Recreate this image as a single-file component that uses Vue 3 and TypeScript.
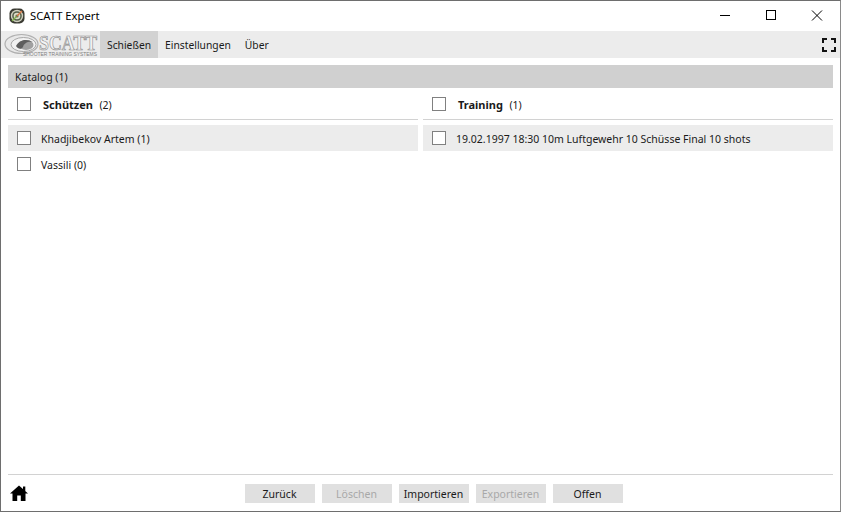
<script setup lang="ts">
const rowsLeft = [
  { label: 'Khadjibekov Artem (1)', shaded: true },
  { label: 'Vassili (0)', shaded: false },
]
const rowsRight = [
  { label: '19.02.1997 18:30 10m Luftgewehr 10 Schüsse Final 10 shots', shaded: true },
]
const menu = [
  { label: 'Schießen', active: true },
  { label: 'Einstellungen', active: false },
  { label: 'Über', active: false },
]
const buttons = [
  { label: 'Zurück', disabled: false },
  { label: 'Löschen', disabled: true },
  { label: 'Importieren', disabled: false },
  { label: 'Exportieren', disabled: true },
  { label: 'Offen', disabled: false },
]
</script>

<template>
  <div class="window">
    <header class="titlebar">
      <svg class="appicon" width="16" height="16" viewBox="0 0 16 16">
        <rect x="0.5" y="0.5" width="15" height="15" rx="5" fill="#3a3a32" />
        <circle cx="8" cy="8" r="6.2" fill="#cfcfbe" />
        <circle cx="8" cy="8" r="4.8" fill="#55604a" />
        <circle cx="8" cy="8" r="3.3" fill="#dcdcc8" />
        <circle cx="8" cy="8" r="1.6" fill="#6a7458" />
        <path d="M8 8 L13 3" stroke="#d9733f" stroke-width="1.3" />
        <path d="M3 13 L7.5 8.5" stroke="#7fb04a" stroke-width="1.3" />
      </svg>
      <span class="apptitle">SCATT Expert</span>
      <div class="winctl">
        <svg width="46" height="30" viewBox="0 0 46 30"><path d="M18 14.5H28" stroke="#000" fill="none" /></svg>
        <svg width="46" height="30" viewBox="0 0 46 30"><rect x="18.5" y="9.5" width="9" height="9" stroke="#000" fill="none" /></svg>
        <svg width="46" height="30" viewBox="0 0 46 30"><path d="M18 9.5L28 19.5M28 9.5L18 19.5" stroke="#000" stroke-width="1" fill="none" /></svg>
      </div>
    </header>

    <nav class="toolbar">
      <svg class="logo" width="95" height="27" viewBox="0 0 95 27">
        <ellipse cx="17.5" cy="13" rx="16.5" ry="9.5" fill="#e8e8e8" stroke="#b0b0b0" stroke-width="1.2" />
        <ellipse cx="19.5" cy="13.5" rx="12.5" ry="7" fill="#f2f2f2" stroke="#a8a8a8" stroke-width="1" />
        <ellipse cx="22" cy="14" rx="7.5" ry="5" fill="#a0a0a0" />
        <path d="M12 15 C15 9 22 7 29 11 C24 10 20 12 19 16 C17 19 14 18 12 15Z" fill="#5e5e5e" />
        <text x="35" y="18.5" class="logo-big" textLength="58" lengthAdjust="spacingAndGlyphs">SCATT</text>
        <text x="19" y="25" class="logo-small" textLength="74" lengthAdjust="spacingAndGlyphs">SHOOTER TRAINING SYSTEMS</text>
      </svg>
      <a v-for="m in menu" :key="m.label" class="tab" :class="{ active: m.active }">{{ m.label }}</a>
      <svg class="fullscreen" width="14" height="14" viewBox="0 0 14 14">
        <path d="M1 5V1H5M9 1H13V5M13 9V13H9M5 13H1V9" fill="none" stroke="#111" stroke-width="2" />
      </svg>
    </nav>

    <main class="content">
      <div class="catalog">Katalog (1)</div>
      <div class="columns">
        <section class="column">
          <div class="colhead">
            <span class="check"></span>
            <span class="coltitle"><b>Schützen</b><span class="count">(2)</span></span>
          </div>
          <div
            v-for="r in rowsLeft"
            :key="r.label"
            class="row"
            :class="{ shaded: r.shaded }"
          >
            <span class="check"></span>
            <span class="rowlabel">{{ r.label }}</span>
          </div>
        </section>
        <section class="column">
          <div class="colhead">
            <span class="check"></span>
            <span class="coltitle"><b>Training</b><span class="count">(1)</span></span>
          </div>
          <div
            v-for="r in rowsRight"
            :key="r.label"
            class="row"
            :class="{ shaded: r.shaded }"
          >
            <span class="check"></span>
            <span class="rowlabel">{{ r.label }}</span>
          </div>
        </section>
      </div>
    </main>

    <footer class="footer">
      <svg class="home" width="18" height="16" viewBox="0 0 18 16">
        <path d="M13 1.5H15.3V6H13Z" fill="#000" />
        <path d="M9 0.5L18 8.6H15.5V16H10.8V10.5H7.2V16H2.5V8.6H0Z" fill="#000" />
      </svg>
      <div class="buttons">
        <button v-for="b in buttons" :key="b.label" class="btn" :class="{ disabled: b.disabled }">{{ b.label }}</button>
      </div>
    </footer>
  </div>
</template>

<style>
html, body { margin: 0; padding: 0; background: #fff; }
</style>

<style scoped>
.window {
  width: 841px;
  height: 512px;
  box-sizing: border-box;
  border: 1px solid #6e6e6e;
  border-right-color: #8a8a8a;
  display: flex;
  flex-direction: column;
  background: #fff;
  font-family: "Noto Sans", "DejaVu Sans", sans-serif;
  font-size: 10.5px;
  color: #1a1a1a;
  overflow: hidden;
}
.titlebar {
  height: 30px;
  flex: none;
  display: flex;
  align-items: center;
  padding-left: 8px;
}
.appicon { margin-right: 5px; }
.apptitle { font-size: 11.25px; color: #000; padding-bottom: 2px; }
.winctl { margin-left: auto; display: flex; }
.winctl svg { display: block; }
.toolbar {
  height: 27px;
  flex: none;
  background: #ececec;
  display: flex;
  align-items: stretch;
  padding-right: 4px;
}
.logo { flex: none; margin-left: 3px; margin-right: 1px; }
.logo-big {
  font-family: "Liberation Serif", serif;
  font-weight: 700;
  font-size: 21px;
  fill: #f4f4f4;
  stroke: #8f8f8f;
  stroke-width: 0.7;
}
.logo-small {
  font-family: "Liberation Sans", sans-serif;
  font-size: 5.5px;
  fill: #808080;
}
.tab {
  display: flex;
  align-items: center;
  padding: 0 7px;
  font-size: 10.3px;
  color: #1a1a1a;
}
.tab.active { background: #d2d2d2; }
.fullscreen { margin-left: auto; align-self: center; margin-right: 0; }
.content {
  flex: 1;
  min-height: 0;
  padding: 7px 7px 0;
}
.catalog {
  height: 23px;
  line-height: 25px;
  background: #d0d0d0;
  padding-left: 7px;
}
.columns {
  display: grid;
  grid-template-columns: 410px 410px;
  column-gap: 5px;
}
.colhead {
  height: 32px;
  box-sizing: border-box;
  display: flex;
  align-items: center;
  padding-left: 9px;
  border-bottom: 1px solid #d2d2d2;
  margin-bottom: 5px;
}
.coltitle { margin-left: 12px; padding-top: 2px; }
.coltitle b { font-weight: 700; font-size: 11px; }
.count { margin-left: 6.5px; }
.row {
  height: 26px;
  display: flex;
  align-items: center;
  padding-left: 9px;
}
.row.shaded { background: #ececec; }
.check {
  width: 12px;
  height: 12px;
  flex: none;
  border: 1px solid #808080;
  background: #fff;
}
.rowlabel { margin-left: 10px; padding-top: 2px; }
.footer {
  flex: none;
  height: 37px;
  margin: 0 7px;
  border-top: 1px solid #d2d2d2;
  position: relative;
  display: flex;
  align-items: flex-start;
  justify-content: center;
  box-sizing: border-box;
}
.home { position: absolute; left: 2px; top: 10px; }
.buttons { display: flex; gap: 7px; margin-top: 9px; margin-left: 26px; }
.btn {
  width: 70px;
  height: 19px;
  border: none;
  padding: 0;
  background: #e0e0e0;
  font: inherit;
  color: #1a1a1a;
}
.btn.disabled { color: #a8a8a8; }
</style>
